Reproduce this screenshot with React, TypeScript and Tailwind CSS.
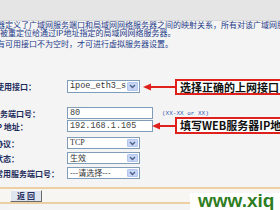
import React from 'react'

const cjk = "font-['Noto_Sans_CJK_SC',sans-serif]"

function Chevron() {
    return (
        <svg width="7" height="5" viewBox="0 0 7 5">
            <path d="M1 1 L3.5 3.5 L6 1" fill="none" stroke="#4d6185" strokeWidth="1.4" />
        </svg>
    )
}

function Select({ value, mono = false, serif = false }: { value: string; mono?: boolean; serif?: boolean }) {
    const font = mono
        ? "font-['Liberation_Mono',monospace] text-[8.5px]"
        : serif
            ? "font-['Liberation_Serif','Noto_Sans_CJK_SC',serif] text-[8px]"
            : `${cjk} text-[8px]`
    return (
        <div className="w-[73px] h-full border border-[#7f9db9] bg-white flex items-stretch">
            <div className={`flex-1 flex items-center pl-[2px] text-[#333] whitespace-nowrap overflow-hidden ${font}`}>{value}</div>
            <div className="w-[11px] my-[1px] mr-[1px] bg-[#c7d6f7] border border-[#b4c6ee] rounded-[1px] flex items-center justify-center">
                <Chevron />
            </div>
        </div>
    )
}

function Input({ value }: { value: string }) {
    return (
        <div className="w-[86px] h-full border border-[#7f9db9] bg-white flex items-center pl-[2px] font-['Liberation_Mono',monospace] text-[8.5px] text-[#444]">
            {value}
        </div>
    )
}

function Row({ label, shift, h, mt, children }: { label: string; shift: string; h: string; mt: string; children: React.ReactNode }) {
    return (
        <div className={`flex items-center ${h} ${mt}`}>
            <div className="w-[67px] overflow-hidden">
                <span className={`block whitespace-nowrap text-[8px] leading-[9px] font-bold text-[#1e2d5c] ${shift}`}>{label}</span>
            </div>
            {children}
        </div>
    )
}

function Arrow({ className }: { className: string }) {
    return (
        <svg className={`absolute ${className}`} width="32" height="8" viewBox="0 0 32 8">
            <path d="M0 4 L8 0.5 L8 7.5 Z" fill="#e0201c" />
            <rect x="7" y="3" width="25" height="2" fill="#e0201c" />
        </svg>
    )
}

export default function App() {
    return (
        <div className={`w-[280px] h-[210px] overflow-hidden relative bg-[#f4f4f4] ${cjk}`}>
            <div className="h-[21px] bg-[#e5e5e5] border-b border-[#d8d8d8]" />

            <div className="text-[8px] leading-[8px] text-[#1d3a88] whitespace-nowrap -ml-[3px]">
                <p className="h-[8px]">器定义了广域网服务端口和局域网网络服务器之间的映射关系，所有对该广域网服务</p>
                <p className="h-[8px] ml-[3px]">被重定位给通过IP地址指定的局域网网络服务器。</p>
                <p className="h-[8px] mt-[3px]">有可用接口不为空时，才可进行虚拟服务器设置。</p>
            </div>

            <Row label="使用接口：" shift="-ml-[4px]" h="h-[13px]" mt="mt-[32px]">
                <Select value="ipoe_eth3_s" mono />
            </Row>
            <Row label="服务端口号：" shift="-ml-[8px]" h="h-[12px]" mt="mt-[14px]">
                <Input value="80" />
                <span className="ml-[9px] font-['Liberation_Mono',monospace] text-[6px] text-[#3557b0]">(XX-XX or XX)</span>
            </Row>
            <Row label="IP 地址：" shift="-ml-[6px]" h="h-[12px]" mt="mt-[1px]">
                <Input value="192.168.1.105" />
            </Row>
            <Row label="协议：" shift="-ml-[5px]" h="h-[12px]" mt="mt-[5px]">
                <Select value="TCP" serif />
            </Row>
            <Row label="状态：" shift="-ml-[5px]" h="h-[12px]" mt="mt-[3px]">
                <Select value="生效" />
            </Row>
            <Row label="常用服务端口号：" shift="-ml-[5px]" h="h-[12px]" mt="mt-[3px]">
                <Select value="---请选择---" />
            </Row>

            <div className="mt-[8px] h-[17px] border-y-2 border-[#eccfa3] bg-[#f8f6f2] flex items-center pl-[10px]">
                <button className="w-[32px] h-[12px] bg-[#dfe5ef] border border-t-[#f8f8f8] border-l-[#f8f8f8] border-r-[#6a6a6a] border-b-[#6a6a6a] text-[8px] leading-[10px] font-bold text-[#1e2d5c]">
                    返 回
                </button>
            </div>

            {/* annotations */}
            <Arrow className="left-[143px] top-[83px]" />
            <div className="absolute left-[175px] top-[79px] w-[120px] h-[16px] border-2 border-[#e0201c] bg-white flex items-center pl-[3px] text-[11px] font-bold text-[#111] whitespace-nowrap">
                选择正确的上网接口
            </div>
            <Arrow className="left-[152px] top-[122px]" />
            <div className="absolute left-[175px] top-[117px] w-[120px] h-[17px] border-2 border-[#e0201c] bg-white flex items-center pl-[3px] text-[11px] font-bold text-[#111] whitespace-nowrap">
                填写WEB服务器IP地址
            </div>

            <div className="absolute left-[190px] top-[193px] w-[90px] h-[17px] bg-white pl-[8px] font-['Liberation_Sans',sans-serif] text-[19px] leading-[15px] font-bold text-[#2f7d22] whitespace-nowrap overflow-hidden">
                www.xiq
            </div>
        </div>
    )
}
